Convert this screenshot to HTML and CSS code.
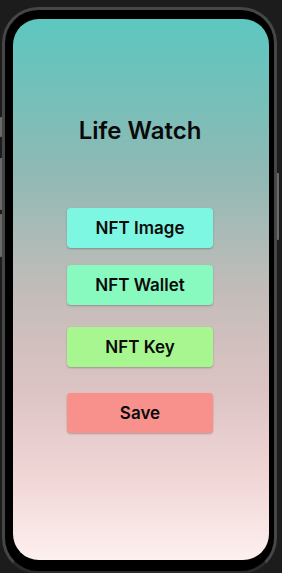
FILE: index.html
```html
<!DOCTYPE html>
<html lang="en">
<head>
    <meta charset="UTF-8">
    <meta name="viewport" content="width=device-width, initial-scale=1.0">
    <title>Life Watch</title>
    <link rel="stylesheet" href="styles.css">
</head>
<body>
    <div class="phone">
        <span class="side-btn left one"></span>
        <span class="side-btn left two"></span>
        <span class="side-btn left three"></span>
        <span class="side-btn right power"></span>
        <div class="screen">
            <h1 class="title">Life Watch</h1>
            <div class="actions">
                <button class="btn image">NFT Image</button> <!-- imagen -->
                <button class="btn wallet">NFT Wallet</button> <!-- billetera -->
                <button class="btn key">NFT Key</button> <!-- llave -->
                <button class="btn save">Save</button> <!-- guardar -->
            </div>
        </div>
    </div>
</body>
</html>
```

FILE: styles.css
```css
body {
    margin: 0;
    background-color: #1c1c1c;
    font-family: Inter, "Noto Sans", sans-serif;
    overflow: hidden;
}
.phone { /* marco del telefono */
    position: relative;
    margin: 7px 0 0 2px;
    width: 256px;
    height: 541px;
    padding: 9px 5px 11px 8px;
    background-color: #000;
    border: 3px solid #464646;
    border-bottom-color: #2a2a2a;
    border-radius: 36px;
}
.side-btn {
    position: absolute;
    width: 2px;
    background-color: #6a6a6a;
}
.side-btn.left { left: -5px; border-radius: 1px 0 0 1px; }
.side-btn.right { right: -5px; border-radius: 0 1px 1px 0; }
.one { top: 107px; height: 20px; }
.two { top: 148px; height: 52px; }
.three { top: 204px; height: 43px; }
.power { top: 163px; height: 67px; }
.screen { /* pantalla con degradado */
    height: 100%;
    padding-right: 2px;
    box-sizing: border-box;
    border-radius: 26px;
    background: linear-gradient(to bottom, #5cc7c0 0%, #8fb9b4 28%, #c2bcb9 50%, #dcc3c3 68%, #f1d6d6 85%, #fdf0ef 100%);
    display: flex;
    flex-direction: column;
    align-items: center;
}
.title {
    margin: 96px 0 0 0;
    font-size: 24px;
    font-weight: 600;
    color: #0a0a0a;
    line-height: 32px;
}
.actions {
    display: flex;
    flex-direction: column;
    margin-top: 61px;
}
.btn { /* botones */
    width: 146px;
    height: 40px;
    border: none;
    border-radius: 4px;
    font-family: Inter, "Noto Sans", sans-serif;
    font-size: 17px;
    font-weight: 600;
    color: #0a0a0a;
    box-shadow: 0 1px 2px rgba(0, 0, 0, 0.25);
    cursor: pointer;
}
.image { background-color: #7df6e2; }
.wallet { background-color: #88f9bf; margin-top: 17px; }
.key { background-color: #a8f690; margin-top: 22px; }
.save { background-color: #f8918b; margin-top: 26px; }
```
